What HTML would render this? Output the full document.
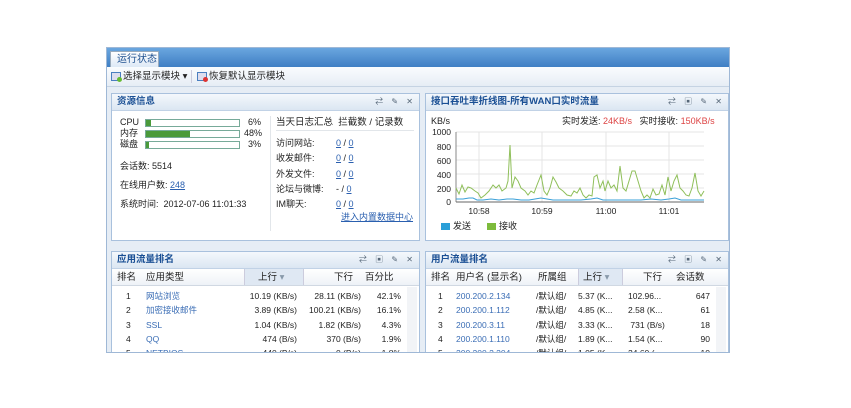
<!DOCTYPE html>
<html><head><meta charset="utf-8"><style>
*{margin:0;padding:0;box-sizing:border-box}
body{width:851px;height:408px;background:#fff;position:relative;overflow:hidden;font-family:"Liberation Sans","Noto Sans CJK SC",sans-serif;font-size:9px;color:#222;line-height:11px}
.a{position:absolute;white-space:nowrap}
.win{position:absolute;left:106px;top:47px;width:624px;height:306px;background:#e6edf5;border:1px solid #9fb8d6;overflow:hidden}
.tabbar{position:absolute;left:0;top:0;width:100%;height:19px;background:linear-gradient(#6aa6df,#3f7fc4)}
.tab{position:absolute;left:3px;top:3px;width:49px;height:16px;background:linear-gradient(#fff,#dde9f6);border:1px solid #9ab;border-bottom:none;color:#1d4f8f;font-size:10px;line-height:13px;padding:1px 0 0 6px}
.tool{position:absolute;left:0;top:19px;width:100%;height:20px;background:linear-gradient(#fafcfe,#e6edf5);border-bottom:1px solid #c5d3e3;font-size:9.5px}
.pan{position:absolute;background:#fff;border:1px solid #a9c1dd}
.ph{position:absolute;left:0;top:0;right:0;height:17px;background:linear-gradient(#f4f8fc,#dbe6f2);border-bottom:1px solid #c1d2e6;color:#1a4f94;font-weight:bold;font-size:9.5px;line-height:12px;padding:2px 0 0 5px}
.ic{position:absolute;top:2px;right:3px;font-size:8px;color:#567;font-weight:normal;letter-spacing:3px}
.bar{position:absolute;height:8px;border:1px solid #7a9;background:#fff}
.bar i{display:block;height:6px;background:#4a9a3a}
.lk{color:#2a5faf;text-decoration:underline}
.th{position:absolute;left:0;right:0;top:17px;height:17px;background:linear-gradient(#fff,#eef2f7);border-bottom:1px solid #d0d8e2;font-size:9.5px;line-height:11px}
.row{position:absolute;font-size:8.5px}
.blue{color:#3a6db5}
</style></head><body>
<div class="win">
 <div class="tabbar"><div class="tab">运行状态</div></div>
 <div class="tool">
  <div class="a" style="left:4px;top:5px;width:10px;height:9px;border:1px solid #4a7fc0;background:#dde"></div>
  <div class="a" style="left:10px;top:10px;width:5px;height:5px;border-radius:50%;background:#6b3"></div>
  <div class="a" style="left:16px;top:4px">选择显示模块 ▾</div>
  <div class="a" style="left:84px;top:3px;width:1px;height:13px;background:#ccd"></div>
  <div class="a" style="left:90px;top:5px;width:10px;height:9px;border:1px solid #4a7fc0;background:#dde"></div>
  <div class="a" style="left:96px;top:10px;width:5px;height:5px;border-radius:50%;background:#d33"></div>
  <div class="a" style="left:102px;top:4px">恢复默认显示模块</div>
 </div>

 <div class="pan" style="left:4px;top:45px;width:309px;height:148px">
  <div class="ph">资源信息<span class="ic">⇄ ✎ ✕</span></div>
  <div class="a" style="left:8px;top:23px">CPU</div>
  <div class="a" style="left:8px;top:34px">内存</div>
  <div class="a" style="left:8px;top:45px">磁盘</div>
  <div class="bar" style="left:33px;top:25px;width:95px"><i style="width:5px"></i></div>
  <div class="bar" style="left:33px;top:36px;width:95px"><i style="width:44px"></i></div>
  <div class="bar" style="left:33px;top:47px;width:95px"><i style="width:3px"></i></div>
  <div class="a" style="left:136px;top:23px">6%</div>
  <div class="a" style="left:132px;top:34px">48%</div>
  <div class="a" style="left:136px;top:45px">3%</div>
  <div class="a" style="left:8px;top:67px">会话数: 5514</div>
  <div class="a" style="left:8px;top:86px">在线用户数: <span class="lk">248</span></div>
  <div class="a" style="left:8px;top:105px">系统时间:&nbsp;&nbsp;2012-07-06 11:01:33</div>
  <div class="a" style="left:158px;top:22px;width:1px;height:115px;background:#e2e6ea"></div>
  <div class="a" style="left:164px;top:23px;font-size:9.5px">当天日志汇总&nbsp;&nbsp;拦截数 / 记录数</div>
  <div class="a" style="left:164px;top:36px;width:138px;height:1px;background:#e2e6ea"></div>
  <div class="a" style="left:164px;top:42px;line-height:15.3px">访问网站:<br>收发邮件:<br>外发文件:<br>论坛与微博:<br>IM聊天:</div>
  <div class="a" style="left:224px;top:42px;line-height:15.3px"><span class="lk">0</span> / <span class="lk">0</span><br><span class="lk">0</span> / <span class="lk">0</span><br><span class="lk">0</span> / <span class="lk">0</span><br>- / <span class="lk">0</span><br><span class="lk">0</span> / <span class="lk">0</span></div>
  <div class="a lk" style="left:229px;top:118px">进入内置数据中心</div>
 </div>

 <div class="pan" style="left:318px;top:45px;width:304px;height:148px">
  <div class="ph">接口吞吐率折线图-所有WAN口实时流量<span class="ic">⇄ ▣ ✎ ✕</span></div>
  <div class="a" style="left:5px;top:22px">KB/s</div>
  <div class="a" style="left:136px;top:22px">实时发送: <span style="color:#d44">24KB/s</span>&nbsp;&nbsp;&nbsp;实时接收: <span style="color:#d44">150KB/s</span></div>
  <div class="a" style="left:15px;top:129px;width:9px;height:7px;background:#2a9fd8"></div>
  <div class="a" style="left:27px;top:127px">发送</div>
  <div class="a" style="left:61px;top:129px;width:9px;height:7px;background:#7dbb3c"></div>
  <div class="a" style="left:73px;top:127px">接收</div>
 </div>
 <svg class="a" style="left:0;top:0" width="624" height="306" viewBox="106 47 624 306">
  <g font-family="Liberation Sans" font-size="8.5" fill="#222" text-anchor="end">
   <text x="450" y="134">1000</text><text x="450" y="149">800</text><text x="450" y="163">600</text><text x="450" y="177">400</text><text x="450" y="191">200</text><text x="450" y="204">0</text>
  </g>
  <g font-family="Liberation Sans" font-size="8.5" fill="#222" text-anchor="middle">
   <text x="478" y="213">10:58</text><text x="541" y="213">10:59</text><text x="605" y="213">11:00</text><text x="668" y="213">11:01</text>
  </g>
  <g stroke="#e4e4e4" stroke-width="1">
   <line x1="455" y1="131" x2="703" y2="131"/><line x1="455" y1="145" x2="703" y2="145"/><line x1="455" y1="159" x2="703" y2="159"/><line x1="455" y1="173" x2="703" y2="173"/><line x1="455" y1="187" x2="703" y2="187"/>
   <line x1="478" y1="131" x2="478" y2="201"/><line x1="541" y1="131" x2="541" y2="201"/><line x1="605" y1="131" x2="605" y2="201"/><line x1="668" y1="131" x2="668" y2="201"/>
  </g>
  <line x1="455" y1="131" x2="455" y2="201" stroke="#888"/>
  <line x1="455" y1="201" x2="703" y2="201" stroke="#666"/>
  <polyline fill="none" stroke="#8fbf5a" stroke-width="1" points="455,187 458,193 461,184 464,191 467,186 470,187 474,190 477,192 480,197 484,194 488,190 492,184 495,187 498,184 501,190 505,187 507,180 509,144 511,187 514,176 517,180 520,187 524,190 527,194 530,190 533,192 536,184 540,174 543,190 546,194 549,187 552,176 555,181 558,187 562,190 566,194 570,195 573,190 576,192 579,187 582,194 585,197 588,194 591,195 593,176 596,174 599,187 602,180 604,190 607,180 610,187 613,184 616,190 619,165 622,187 625,190 628,180 631,170 634,170 637,180 640,190 643,197 646,194 649,197 652,188 655,194 658,193 661,184 664,194 667,176 670,190 673,180 676,174 679,187 682,190 685,194 688,195 691,187 694,172 697,190 700,195 703,190"/>
  <polyline fill="none" stroke="#3aa0d8" stroke-width="1" points="455,198 462,198 468,197 472,197 476,199 482,199 490,198 498,199 506,198 512,198 520,199 528,199 534,198 540,197 546,198 552,199 560,199 570,199 580,199 590,198 596,197 602,199 612,199 620,199 630,199 640,199 650,198 660,199 668,198 674,197 680,199 690,199 700,199 703,199"/>
 </svg>

 <div class="pan" style="left:4px;top:203px;width:309px;height:110px">
  <div class="ph">应用流量排名<span class="ic">⇄ ▣ ✎ ✕</span></div>
  <div class="th">
   <div class="a" style="left:5px;top:3px">排名</div>
   <div class="a" style="left:34px;top:3px">应用类型</div>
   <div class="a" style="left:132px;top:0;width:60px;height:16px;background:#dfe8f3;border-left:1px solid #ccd;border-right:1px solid #ccd"></div>
   <div class="a" style="left:146px;top:3px">上行 <span style="color:#89a">▾</span></div>
   <div class="a" style="left:222px;top:3px">下行</div>
   <div class="a" style="left:253px;top:3px">百分比</div>
  </div>
  <div class="row a" style="left:14px;top:37px;line-height:14.3px">1<br>2<br>3<br>4<br>5</div>
  <div class="row a blue" style="left:34px;top:37px;line-height:14.3px">网站浏览<br>加密接收邮件<br>SSL<br>QQ<br>NETBIOS</div>
  <div class="row a" style="right:122px;top:37px;line-height:14.3px;text-align:right">10.19 (KB/s)<br>3.89 (KB/s)<br>1.04 (KB/s)<br>474 (B/s)<br>440 (B/s)</div>
  <div class="row a" style="right:58px;top:37px;line-height:14.3px;text-align:right">28.11 (KB/s)<br>100.21 (KB/s)<br>1.82 (KB/s)<br>370 (B/s)<br>0 (B/s)</div>
  <div class="row a" style="right:18px;top:37px;line-height:14.3px;text-align:right">42.1%<br>16.1%<br>4.3%<br>1.9%<br>1.8%</div>
  <div class="a" style="right:2px;top:35px;width:10px;height:80px;background:#f2f4f7"></div>
 </div>

 <div class="pan" style="left:318px;top:203px;width:304px;height:110px">
  <div class="ph">用户流量排名<span class="ic">⇄ ▣ ✎ ✕</span></div>
  <div class="th">
   <div class="a" style="left:5px;top:3px">排名</div>
   <div class="a" style="left:30px;top:3px">用户名 (显示名)</div>
   <div class="a" style="left:112px;top:3px">所属组</div>
   <div class="a" style="left:152px;top:0;width:45px;height:16px;background:#dfe8f3;border-left:1px solid #ccd;border-right:1px solid #ccd"></div>
   <div class="a" style="left:157px;top:3px">上行 <span style="color:#89a">▾</span></div>
   <div class="a" style="left:217px;top:3px">下行</div>
   <div class="a" style="left:250px;top:3px">会话数</div>
  </div>
  <div class="row a" style="left:12px;top:37px;line-height:14.3px">1<br>2<br>3<br>4<br>5</div>
  <div class="row a blue" style="left:30px;top:37px;line-height:14.3px">200.200.2.134<br>200.200.1.112<br>200.200.3.11<br>200.200.1.110<br>200.200.2.204</div>
  <div class="row a" style="left:110px;top:37px;line-height:14.3px">/默认组/<br>/默认组/<br>/默认组/<br>/默认组/<br>/默认组/</div>
  <div class="row a" style="left:152px;top:37px;line-height:14.3px">5.37 (K...<br>4.85 (K...<br>3.33 (K...<br>1.89 (K...<br>1.05 (K...</div>
  <div class="row a" style="left:202px;top:37px;line-height:14.3px">102.96...<br>2.58 (K...<br>&nbsp;731 (B/s)<br>1.54 (K...<br>24.60 (...</div>
  <div class="row a" style="right:18px;top:37px;line-height:14.3px;text-align:right">647<br>61<br>18<br>90<br>10</div>
  <div class="a" style="right:2px;top:35px;width:10px;height:80px;background:#f2f4f7"></div>
 </div>
</div>
</body></html>
